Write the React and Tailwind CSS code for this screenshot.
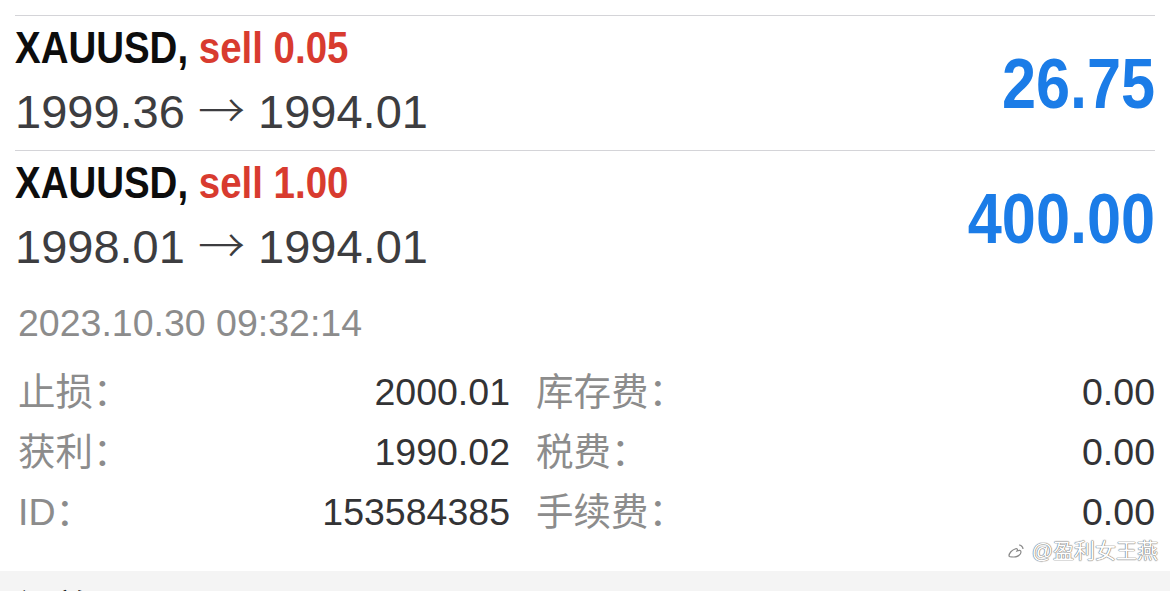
const font = "font-['Liberation_Sans','Noto_Sans_CJK_SC',sans-serif]";

const positions = [
  { symbol: "XAUUSD", side: "sell", volume: "0.05", open: "1999.36", close: "1994.01", profit: "26.75" },
  { symbol: "XAUUSD", side: "sell", volume: "1.00", open: "1998.01", close: "1994.01", profit: "400.00", expanded: true },
];

const details = [
  ["止损：", "2000.01", "库存费：", "0.00"],
  ["获利：", "1990.02", "税费：", "0.00"],
  ["ID：", "153584385", "手续费：", "0.00"],
];

const TradeRow = ({ trade }) => (
  <div className="ml-[15px] mr-[15px] border-t border-[#d4d4d8] pt-[7px] pb-[10px]">
    <div className="flex">
      <div className="flex-1">
        <div className="h-[50px] whitespace-nowrap text-[44px] font-bold leading-[50px]">
          <span className="inline-block origin-left scale-x-[0.874]">
            <span className="text-[#0d0d0d]">{trade.symbol}, </span>
            <span className="text-[#d83b2f]">
              {trade.side} {trade.volume}
            </span>
          </span>
        </div>
        <div className="mt-[11px] h-[56px] whitespace-nowrap text-[47px] leading-[56px] text-[#3d3d40]">
          {trade.open}{" "}
          <span className="font-['Noto_Sans_CJK_SC',sans-serif] font-light leading-none">→</span>{" "}
          {trade.close}
        </div>
      </div>
      <div className="mt-[26px] h-[70px] self-start whitespace-nowrap text-[70px] font-bold leading-[70px] text-[#1b7ce7]">
        <span className="inline-block origin-right scale-x-[0.875]">{trade.profit}</span>
      </div>
    </div>

    {trade.expanded ? (
      <div className="pl-[3px]">
        <div className="mt-[26px] h-[44px] text-[37.5px] leading-[44px] text-[#8c8c8c]">
          2023.10.30 09:32:14
        </div>
        <div className="mt-[17px] grid grid-cols-[492px_1fr] gap-x-[26px] text-[37.5px] leading-[60px]">
          {details.map(([l1, v1, l2, v2]) => (
            <div key={l1} className="contents">
              <div className="flex h-[60px] justify-between">
                <span className="text-[#8c8c8c]">{l1}</span>
                <span className="text-[#333335]">{v1}</span>
              </div>
              <div className="flex h-[60px] justify-between">
                <span className="text-[#8c8c8c]">{l2}</span>
                <span className="text-[#333335]">{v2}</span>
              </div>
            </div>
          ))}
        </div>
      </div>
    ) : null}
  </div>
);

export default function App() {
  return (
    <div className={`relative h-[591px] w-[1170px] overflow-hidden bg-white ${font}`}>
      <div className="pt-[15px]">
        {positions.map((trade) => (
          <TradeRow key={trade.open} trade={trade} />
        ))}
      </div>

      <div className="mt-[19px] h-[40px] bg-[#f4f4f4] pl-[18px] pt-[18px] text-[36px] font-bold leading-[40px] text-[#111]">
        订单
      </div>

      <div className="absolute right-[12px] top-[539px] flex items-center gap-[6px] text-[21px] leading-[24px] text-white [text-shadow:0_0_1px_#777,0_0_1px_#777,0_0_1px_#777]">
        <svg width="20" height="20" viewBox="0 0 20 20" fill="none" stroke="#888" strokeWidth="1.2">
          <path d="M3 15c0-3 3-6 6-7 2-1 3 0 2 2 2-1 4-1 4 1 0 3-4 5-7 5-3 0-5 0-5-1z" />
          <path d="M13 4c2 0 4 2 4 4" />
        </svg>
        <span>@盈利女王燕</span>
      </div>
    </div>
  );
}
